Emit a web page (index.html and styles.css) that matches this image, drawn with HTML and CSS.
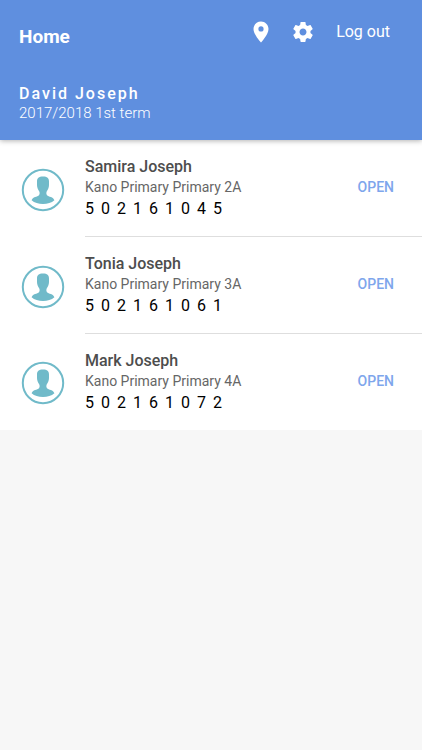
FILE: index.html
```html
<!doctype html>
<html lang="en">
	<head>
		<title>Home</title>
		<meta charset="utf-8">
		<meta name="viewport" content="width=device-width, initial-scale=1">
		<link rel="stylesheet" href="styles.css">
	</head>
	<body>

		<!-- shared avatar -->
		<svg class="sprite" aria-hidden="true">
			<symbol id="avatar" viewBox="0 0 44 44">
				<circle cx="22" cy="22" r="20.200" fill="none" stroke="currentColor" stroke-width="2"/>
				<path fill="currentColor" d="M22 8.500C26.300 8.500 28 10.200 28 13.500V17C28 19.500 27 21.500 25.700 23.500C25.200 24.800 25.200 26 26 27.200C27.500 28.800 32.500 28.800 33.400 32.300C30.500 34.800 26.500 36 22 36S13.500 34.800 10.600 32.300C11.500 28.800 16.500 28.800 18 27.200C18.800 26 18.800 24.800 18.300 23.500C17 21.500 16 19.500 16 17V13.500C16 10.200 17.700 8.500 22 8.500Z"/>
			</symbol>
		</svg>

		<header class="header">
			<div class="toolbar">
				<h1 class="title">Home</h1>
				<nav class="actions">
					<button class="icon-btn" type="button" aria-label="Location">
						<svg class="icon" viewBox="0 0 24 24"><path d="M12 1.500C7.900 1.500 4.500 4.800 4.500 8.900c0 5.500 7.500 13.600 7.500 13.600s7.500-8.100 7.500-13.600c0-4.100-3.400-7.400-7.500-7.400zm0 10a2.600 2.600 0 1 1 0-5.200 2.600 2.600 0 0 1 0 5.200z"/></svg>
					</button>
					<button class="icon-btn" type="button" aria-label="Settings">
						<svg class="icon" viewBox="0 0 24 24"><path d="M19.430 12.980c.04-.32.07-.64.07-.98s-.03-.66-.07-.98l2.110-1.650c.19-.15.24-.42.12-.64l-2-3.460c-.12-.22-.39-.3-.61-.22l-2.490 1c-.52-.4-1.080-.73-1.690-.98l-.38-2.650C14.460 2.180 14.250 2 14 2h-4c-.25 0-.46.18-.49.42l-.38 2.650c-.61.25-1.170.59-1.690.98l-2.490-1c-.23-.09-.49 0-.61.22l-2 3.460c-.13.22-.07.49.12.64l2.110 1.650c-.04.32-.07.65-.07.98s.03.66.07.98l-2.110 1.650c-.19.15-.24.42-.12.64l2 3.460c.12.22.39.3.61.22l2.490-1c.52.4 1.080.73 1.690.98l.38 2.650c.03.24.24.42.49.42h4c.25 0 .46-.18.49-.42l.38-2.650c.61-.25 1.170-.59 1.690-.98l2.490 1c.23.09.49 0 .61-.22l2-3.460c.12-.22.07-.49-.12-.64l-2.110-1.650zM12 15.500c-1.930 0-3.500-1.570-3.500-3.500s1.570-3.500 3.500-3.500 3.500 1.570 3.500 3.500-1.570 3.500-3.500 3.500z"/></svg>
					</button>
					<a class="logout" href="#">Log out</a>
				</nav>
			</div>
			<div class="user">
				<div class="user-name">David Joseph</div>
				<div class="term">2017/2018 1st term</div>
			</div>
		</header>

		<ul class="list">
			<li class="item">
				<svg class="avatar"><use href="#avatar"/></svg>
				<div class="content">
					<div class="info">
						<h2 class="name">Samira Joseph</h2>
						<p class="school">Kano Primary Primary 2A</p>
						<p class="number">502161045</p>
					</div>
					<button class="open" type="button">OPEN</button>
				</div>
			</li>
			<li class="item">
				<svg class="avatar"><use href="#avatar"/></svg>
				<div class="content">
					<div class="info">
						<h2 class="name">Tonia Joseph</h2>
						<p class="school">Kano Primary Primary 3A</p>
						<p class="number">502161061</p>
					</div>
					<button class="open" type="button">OPEN</button>
				</div>
			</li>
			<li class="item">
				<svg class="avatar"><use href="#avatar"/></svg>
				<div class="content">
					<div class="info">
						<h2 class="name">Mark Joseph</h2>
						<p class="school">Kano Primary Primary 4A</p>
						<p class="number">502161072</p>
					</div>
					<button class="open" type="button">OPEN</button>
				</div>
			</li>
		</ul>

	</body>
</html>
```
FILE: styles.css
```css
body{
	margin:0px;
	background:#f7f7f7;
	font-family:Roboto, "Liberation Sans", sans-serif;
	font-size:16px;
}

h1, h2, p, ul{
	margin:0px;
	padding:0px;
}

button{
	padding:0px;
	border:0px;
	background:none;
	font-family:inherit;
	cursor:pointer;
}

.sprite{
	display:block;
	width:0px;
	height:0px;
}

/** header **/
.header{
	position:relative;			/** keeps the shadow above the list **/
	padding:20px 32px 17px 19px;
	background:#5f8fdf;
	color:#fff;
	box-shadow:0 1px 5px rgba(0,0,0,.3);
}

.toolbar{
	display:flex;
	justify-content:space-between;
	align-items:flex-start;
}

.title{
	padding-top:6px;
	font-size:19px;
	line-height:22px;
	font-weight:700;
}

.actions{
	display:flex;
	align-items:center;
}

.icon-btn{
	width:24px;
	height:24px;
	margin-right:18px;
	color:#fff;
}

.icon{
	display:block;
	width:24px;
	height:24px;
	fill:currentColor;
}

.logout{
	margin-left:3px;
	color:#fff;
	line-height:22px;
	text-decoration:none;
}

.user{
	padding-top:36px;
}

.user-name{
	font-weight:500;
	line-height:20px;
	letter-spacing:2px;
}

.term{
	font-size:15px;
	line-height:19px;
	font-weight:300;
}

/** children list **/
.list{
	background:#fff;
	list-style:none;
}

.item{
	display:flex;
	align-items:center;
	padding-left:21px;
}

.avatar{
	flex:none;
	width:44px;
	height:44px;
	margin-right:20px;
	padding-top:2px;
	color:#70bac9;
}

.content{
	flex:1;
	display:flex;
	justify-content:space-between;
	align-items:center;
	padding:16px 28px 17px 0px;
	border-bottom:1px solid #dedede;
}

.item:last-child .content{
	border-bottom:0px;
}

.name{
	color:#4d4d4d;
	font-size:16px;
	line-height:21px;
	font-weight:500;
}

.school{
	color:#666;
	font-size:14px;
	line-height:21px;
}

.number{
	color:#000;
	font-size:16px;
	line-height:21px;
	letter-spacing:7px;
}

.open{
	color:#7ea6ec;
	font-size:14px;
	line-height:21px;
	font-weight:500;
}
```
